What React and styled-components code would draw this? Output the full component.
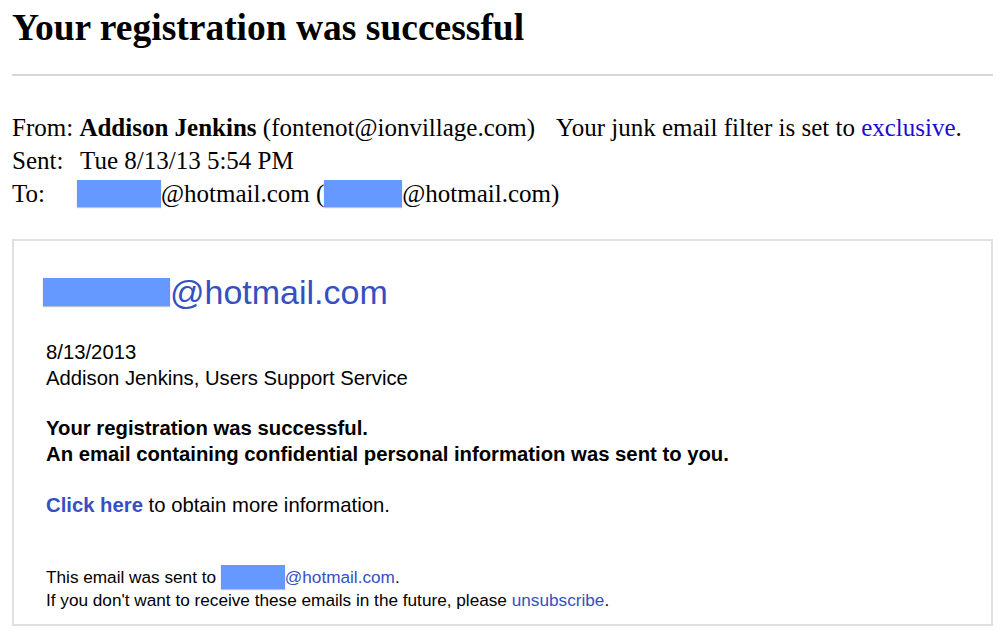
import React from "react";
import styled, { createGlobalStyle } from "styled-components";

const Global = createGlobalStyle`
  html, body { margin: 0; padding: 0; background: #fff; }
  body { font-family: "Liberation Serif", "Times New Roman", serif; color: #000; }
`;

const Page = styled.div`
  padding: 0 10px 0 12px;
  width: 981px;
`;

const Title = styled.h1`
  margin: 0;
  padding-top: 6px;
  font-family: "Liberation Serif", serif;
  font-weight: bold;
  font-size: 37.5px;
  line-height: 44px;
`;

const Divider = styled.div`
  height: 2px;
  background: #d6d6d6;
  margin-top: 24px;
`;

const Header = styled.div`
  margin-top: 35px;
  font-size: 25px;
  line-height: 33px;
`;

const HeaderRow = styled.div`
  display: flex;
  align-items: center;
  white-space: pre;
`;

const Label = styled.span`
  display: inline-block;
  width: ${(p) => (p.$w ? `${p.$w}px` : "auto")};
`;

const Junk = styled.span`
  margin-left: 21px;
`;

const HeaderLink = styled.a`
  color: #1a0dcc;
  text-decoration: none;
`;

const Redact = styled.span`
  display: inline-block;
  width: ${(p) => p.$w}px;
  height: ${(p) => p.$h}px;
  background: #6699ff;
  vertical-align: middle;
  box-shadow: 0 1px 1px rgba(60, 80, 140, 0.35);
`;

const Box = styled.div`
  margin-top: 29px;
  border: 2px solid #e0e0e0;
  padding: 31px 30px 13px 32px;
  font-family: "Liberation Sans", Arial, sans-serif;
`;

const Address = styled.div`
  display: flex;
  align-items: center;
  font-size: 34px;
  line-height: 40px;
  color: #3550c0;
  margin-left: -3px;
`;

const Para = styled.p`
  margin: ${(p) => p.$mt || 0}px 0 0;
  font-size: 20.3px;
  line-height: 26px;
  font-weight: ${(p) => (p.$bold ? "bold" : "normal")};
`;

const BodyLink = styled.a`
  color: #3550c0;
  text-decoration: none;
  font-weight: ${(p) => (p.$bold ? "bold" : "normal")};
`;

const Footer = styled.div`
  margin-top: 47px;
  font-size: 17.2px;
  line-height: 22px;
`;

const FooterRow = styled.div`
  display: flex;
  align-items: center;
  white-space: pre;
`;

export default function App() {
  return (
    <>
      <Global />
      <Page>
        <Title>Your registration was successful</Title>
        <Divider />
        <Header>
          <HeaderRow>
            From: <b>Addison Jenkins</b> (fontenot@ionvillage.com)
            <Junk>
              Your junk email filter is set to <HeaderLink href="#">exclusive</HeaderLink>.
            </Junk>
          </HeaderRow>
          <HeaderRow>
            <Label $w={68}>Sent:</Label>
            Tue 8/13/13 5:54 PM
          </HeaderRow>
          <HeaderRow>
            <Label $w={65}>To:</Label>
            <Redact $w={84} $h={27} />
            @hotmail.com (
            <Redact $w={78} $h={27} />
            @hotmail.com)
          </HeaderRow>
        </Header>
        <Box>
          <Address>
            <Redact $w={127} $h={28} />
            @hotmail.com
          </Address>
          <Para $mt={27}>8/13/2013</Para>
          <Para>Addison Jenkins, Users Support Service</Para>
          <Para $mt={24} $bold>Your registration was successful.</Para>
          <Para $bold>An email containing confidential personal information was sent to you.</Para>
          <Para $mt={25}>
            <BodyLink href="#" $bold>Click here</BodyLink> to obtain more information.
          </Para>
          <Footer>
            <FooterRow>
              This email was sent to{" "}
              <Redact $w={64} $h={24} />
              <BodyLink href="#">@hotmail.com</BodyLink>.
            </FooterRow>
            <FooterRow>
              If you don't want to receive these emails in the future, please{" "}
              <BodyLink href="#">unsubscribe</BodyLink>.
            </FooterRow>
          </Footer>
        </Box>
      </Page>
    </>
  );
}
